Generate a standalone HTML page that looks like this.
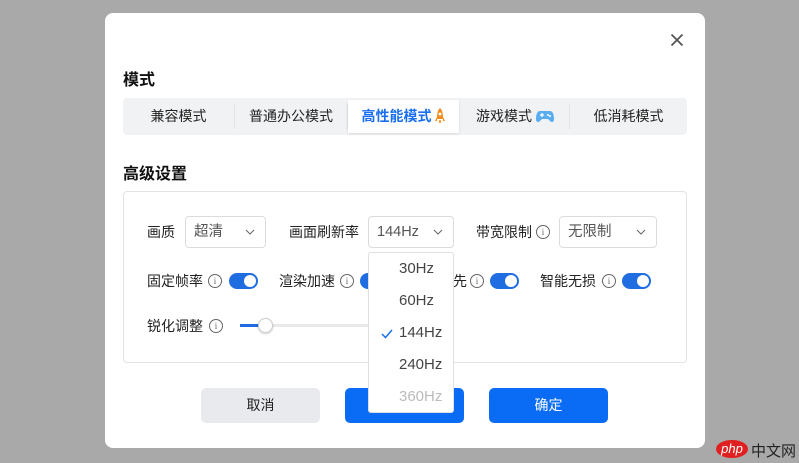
<!DOCTYPE html>
<html><head><meta charset="utf-8"><style>
*{margin:0;padding:0;box-sizing:border-box}
body{width:799px;height:463px;background:#a9a9a9;position:relative;overflow:hidden;font-family:"Liberation Sans","Noto Sans CJK SC",sans-serif;color:#222;font-size:13px}
.a{position:absolute}
.modal{left:105px;top:13px;width:600px;height:435px;background:#fff;border-radius:8px}
.h{font-size:16px;font-weight:bold;color:#111}
.tabs{left:123px;top:98px;width:564px;height:37px;background:#f1f2f4;border-radius:4px}
.tab{position:absolute;top:0;height:37px;line-height:37px;text-align:center;font-size:14px;color:#222}
.sep{position:absolute;top:6px;width:1px;height:25px;background:#e0e2e6}
.box{left:123px;top:191px;width:564px;height:172px;border:1px solid #e3e3e3;border-radius:4px}
.lbl{position:absolute;font-size:14px;color:#222;line-height:18px}
.sel{position:absolute;height:32px;border:1px solid #dcdcdc;border-radius:4px;line-height:30px;padding-left:8px;color:#555;font-size:14.5px}
.sel svg{position:absolute;right:10px;top:12px}
.info{position:absolute;width:14px;height:14px;border:1px solid #666;border-radius:50%;font-size:9px;line-height:12px;text-align:center;color:#666;font-family:"Liberation Serif",serif}
.tg{position:absolute;width:29px;height:16px;border-radius:8px;background:#1f6de0}
.tg::after{content:"";position:absolute;right:2px;top:2px;width:12px;height:12px;border-radius:50%;background:#fff}
.btn{position:absolute;top:388px;width:119px;height:35px;border-radius:5px;line-height:35px;text-align:center;font-size:14px}
.dd{left:368px;top:252px;width:86px;height:161px;background:#fff;border:1px solid #e0e0e0;border-radius:3px}
.it{position:absolute;left:30px;font-size:15px;color:#444}
</style></head><body>
<div class="a modal"></div>
<svg class="a" style="left:670px;top:33px" width="14" height="14"><path d="M1.5 1.5L12.5 12.5M12.5 1.5L1.5 12.5" stroke="#555" stroke-width="1.8"/></svg>
<div class="a h" style="left:123px;top:66px">模式</div>
<div class="a tabs">
<div class="tab" style="left:0;width:111px">兼容模式</div>
<div class="sep" style="left:111px"></div>
<div class="tab" style="left:112px;width:112px">普通办公模式</div>
<div class="sep" style="left:224px"></div>
<div class="tab" style="left:225px;width:111px;top:2px;height:33px;line-height:33px;background:#fff;color:#1a6ff0;font-weight:bold;box-shadow:0 1px 3px rgba(0,0,0,.1)">高性能模式 <svg width="10" height="16" style="vertical-align:-3px"><path d="M5 0C2 3 2 7 2 11h6c0-4 0-8-3-11z" fill="#f08c1a"/><path d="M2 9L0 13h2zM8 9l2 4H8z" fill="#f08c1a"/><circle cx="5" cy="6" r="1.5" fill="#fff"/><path d="M4 12h2v3H4z" fill="#f5a640"/></svg></div>
<div class="sep" style="left:446px"></div>
<div class="tab" style="left:337px;width:110px">游戏模式 <svg width="18" height="14" style="vertical-align:-2px"><path d="M4 2h10c3 0 4 4 4 8 0 3-2 4-4 2l-2-2H6l-2 2c-2 2-4 1-4-2 0-4 1-8 4-8z" fill="#5aaef0"/><path d="M4 6h4M6 4v4" stroke="#fff" stroke-width="1.3"/><circle cx="12" cy="6" r="1" fill="#fff"/><circle cx="14" cy="7" r="1" fill="#fff"/></svg></div>
<div class="tab" style="left:447px;width:117px">低消耗模式</div>
</div>
<div class="a h" style="left:123px;top:160px">高级设置</div>
<div class="a box"></div>
<div class="lbl" style="left:147px;top:223px">画质</div>
<div class="sel" style="left:185px;top:216px;width:81px">超清<svg width="10" height="6"><path d="M1 1l4 4 4-4" stroke="#666" fill="none"/></svg></div>
<div class="lbl" style="left:289px;top:223px">画面刷新率</div>
<div class="sel" style="left:368px;top:216px;width:86px">144Hz<svg width="10" height="6"><path d="M1 1l4 4 4-4" stroke="#666" fill="none"/></svg></div>
<div class="lbl" style="left:476px;top:223px">带宽限制</div>
<div class="info" style="left:536px;top:225px">i</div>
<div class="sel" style="left:559px;top:216px;width:98px">无限制<svg width="10" height="6"><path d="M1 1l4 4 4-4" stroke="#666" fill="none"/></svg></div>
<div class="lbl" style="left:147px;top:272px">固定帧率</div>
<div class="info" style="left:208px;top:274px">i</div>
<div class="tg" style="left:229px;top:273px"></div>
<div class="lbl" style="left:279px;top:272px">渲染加速</div>
<div class="info" style="left:340px;top:274px">i</div>
<div class="tg" style="left:360px;top:273px"></div>
<div class="lbl" style="left:411px;top:272px">画质优先</div>
<div class="info" style="left:470px;top:274px">i</div>
<div class="tg" style="left:490px;top:273px"></div>
<div class="lbl" style="left:540px;top:272px">智能无损</div>
<div class="info" style="left:602px;top:274px">i</div>
<div class="tg" style="left:622px;top:273px"></div>
<div class="lbl" style="left:147px;top:317px">锐化调整</div>
<div class="info" style="left:209px;top:319px">i</div>
<div class="a" style="left:240px;top:324px;width:160px;height:3px;background:#e8e9eb;border-radius:2px"></div>
<div class="a" style="left:240px;top:324px;width:25px;height:3px;background:#1f6de0"></div>
<div class="a" style="left:258px;top:318px;width:15px;height:15px;border-radius:50%;background:#fff;border:1px solid #ccc;box-shadow:0 1px 2px rgba(0,0,0,.2)"></div>
<div class="btn" style="left:201px;background:#e9eaee;color:#222">取消</div>
<div class="btn" style="left:345px;background:#0a6cf5"></div>
<div class="btn" style="left:489px;background:#0a6cf5;color:#fff">确定</div>
<div class="a dd">
<div class="it" style="top:7px">30Hz</div>
<div class="it" style="top:39px">60Hz</div>
<svg class="a" style="left:12px;top:76px" width="12" height="10"><path d="M1 5l3.5 3.5L11 1" stroke="#1a6ff0" stroke-width="1.5" fill="none"/></svg>
<div class="it" style="top:71px">144Hz</div>
<div class="it" style="top:103px">240Hz</div>
<div class="it" style="top:135px;color:#bbb">360Hz</div>
</div>
<div class="a" style="left:716px;top:440px;width:32px;height:18px;border-radius:50%;background:#e02020;color:#fff;font-size:13px;font-style:italic;line-height:17px;text-align:center">php</div>
<div class="a" style="left:751px;top:440px;font-size:15px;color:#222">中文网</div>
</body></html>
